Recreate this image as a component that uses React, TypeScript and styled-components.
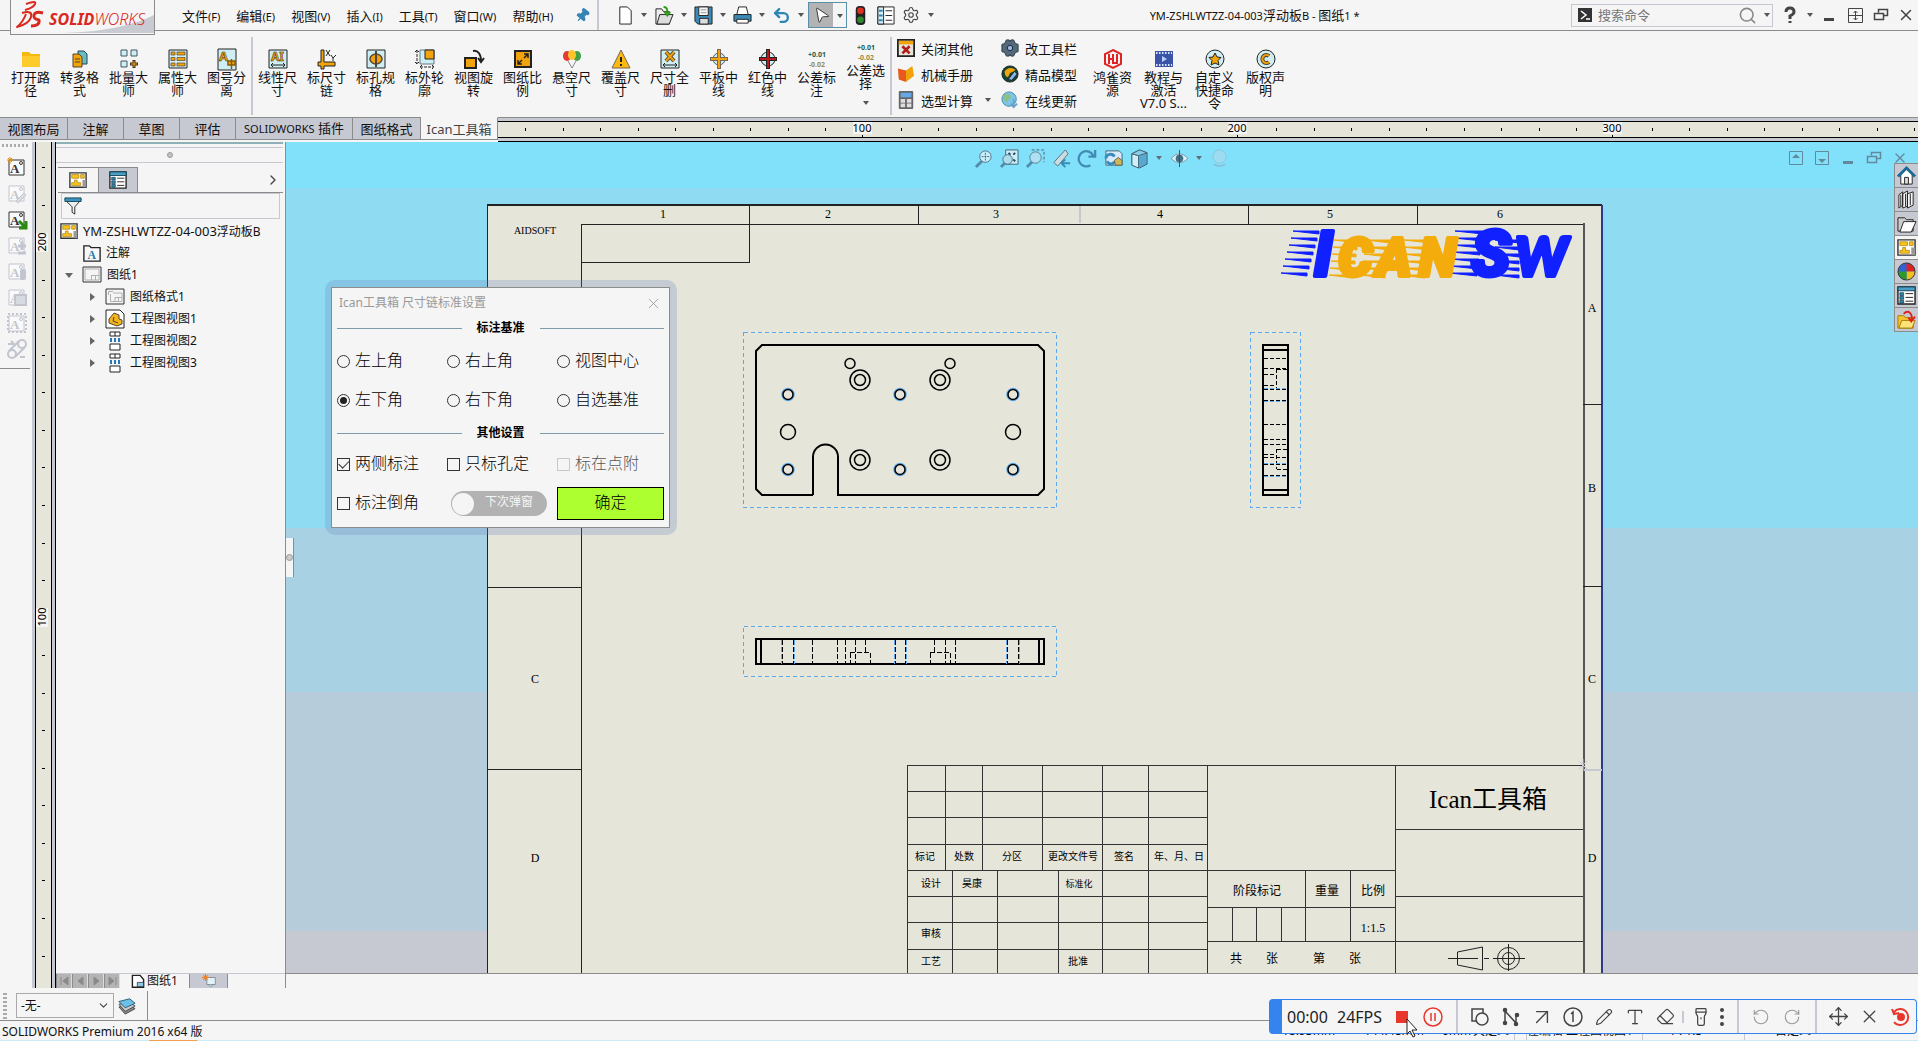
import React from "react";
import styled, { createGlobalStyle, css } from "styled-components";
import {
  MousePointer2, Settings, Pin, Search, ArrowUpRight, Pencil, Type, Eraser,
  Move, X, ChevronRight, ChevronDown, Undo2, RotateCcw, RotateCw, Flashlight,
} from "lucide-react";

const GREY = "#c6c8d2";
const LINE = "#8c8c8c";
const FACE = "#f5f5f5";
const PAPER = "#e5e5da";

const Global = createGlobalStyle`
  * { box-sizing: border-box; }
  body { margin: 0; background: ${FACE}; overflow: hidden; }
  body, button, input, select { font-family: "Noto Sans", "Noto Sans CJK SC", sans-serif; color: #111; }
  button { border: 0; background: none; padding: 0; }
  svg { display: block; flex: none; overflow: visible; }
`;

const Page = styled.div`
  display: flex;
  flex-direction: column;
  height: 100vh;
  background: ${FACE};
  font-size: 13px;
  line-height: 16px;
`;

/* ---------- title bar ---------- */
const TitleBar = styled.header`
  display: flex;
  align-items: center;
  height: 31px;
  flex: none;
  border-bottom: 1px solid ${LINE};
  padding-left: 10px;
`;
const Brand = styled.div`
  align-self: flex-start;
  width: 145px;
  height: 35px;
  margin-right: 27px;
  border: 1px solid ${LINE};
  border-top: 0;
  background: ${FACE};
  z-index: 2;
  flex: none;
`;
const Menu = styled.nav`
  display: flex;
  gap: 16px;
  button { font-size: 13px; white-space: nowrap; }
`;
const Small = styled.span`
  font-size: 11px;
`;
const PinBox = styled.button`
  margin: 0 7px 0 22px;
  color: #3585b5;
`;
const QuickBar = styled.div`
  display: flex;
  align-items: center;
  height: 30px;
  padding-left: 14px;
  border-left: 2px solid ${GREY};
`;
const QuickButton = styled.button<{ $wide?: boolean }>`
  display: grid;
  place-items: center;
  width: ${(p) => (p.$wide ? 26 : 24)}px;
  height: 26px;
`;
const Drop = styled.button<{ $w?: number }>`
  display: grid;
  place-items: center;
  width: ${(p) => p.$w ?? 14}px;
  height: 26px;
  flex: none;
  &::after {
    content: "";
    border: 3px solid transparent;
    border-top: 4px solid #555;
    border-bottom: 0;
  }
`;
const SelectTool = styled.div`
  display: flex;
  width: 39px;
  height: 26px;
  border: 1px solid #5b8fa8;
  margin: 0 1px 0 1px;
  button:first-child { flex: 1; display: grid; place-items: center; background: #b3b3b3; }
`;
const DocTitle = styled.h1`
  flex: 1;
  margin: 0;
  text-align: center;
  font-size: 13px;
  font-weight: 400;
  white-space: nowrap;
`;
const SearchBox = styled.label`
  display: flex;
  align-items: center;
  gap: 5px;
  width: 202px;
  height: 23px;
  padding: 0 0 0 5px;
  border: 1px solid ${GREY};
  flex: none;
  input { flex: 1; min-width: 0; border: 0; outline: 0; background: none; font-size: 13px; padding: 0; }
  input::placeholder { color: #777; opacity: 1; }
`;
const WindowButtons = styled.div`
  display: flex;
  padding-left: 4px;
  flex: none;
`;
const WindowButton = styled.button<{ $w?: number }>`
  width: ${(p) => p.$w ?? 26}px;
  height: 26px;
  display: grid;
  place-items: center;
`;

/* ---------- ribbon ---------- */
const Ribbon = styled.section`
  display: flex;
  height: 86px;
  flex: none;
  padding-left: 6px;
`;
const Group = styled.div`
  display: flex;
`;
const Divider = styled.i`
  width: 2px;
  margin: 6px 0 2px;
  background: ${GREY};
`;
const Tool = styled.button<{ $raised?: boolean; $wide?: boolean }>`
  display: flex;
  flex-direction: column;
  align-items: center;
  width: ${(p) => (p.$wide ? 51 : 49)}px;
  padding-top: ${(p) => (p.$raised ? 11 : 18)}px;
  font-size: 13px;
  line-height: 13px;
  white-space: nowrap;
  span { display: block; height: 13px; }
  svg { margin-bottom: 2px; }
`;
const Stack = styled.div<{ $w: number }>`
  width: ${(p) => p.$w}px;
  padding: 4px 0 0 5px;
`;
const StackRow = styled.div`
  display: flex;
  height: 26px;
  align-items: center;
`;
const StackTool = styled.button`
  display: flex;
  align-items: center;
  gap: 6px;
  font-size: 13px;
  white-space: nowrap;
`;

/* ---------- command tabs + rulers ---------- */
const TabRow = styled.div`
  display: flex;
  height: 25px;
  flex: none;
`;
const CommandTab = styled.button<{ $w: number; $on?: boolean }>`
  width: ${(p) => p.$w}px;
  height: 23px;
  font-size: 13px;
  line-height: 18px;
  white-space: nowrap;
  flex: none;
  background: ${(p) => (p.$on ? FACE : GREY)};
  color: ${(p) => (p.$on ? "#444" : "#111")};
  border: 1px solid ${LINE};
  border-left: 0;
  border-top-color: ${(p) => (p.$on ? FACE : LINE)};
`;
const RulerX = styled.div`
  flex: 1;
  min-width: 0;
  border-top: 1px solid ${LINE};
  border-bottom: 1px solid #000;
  background: ${GREY};
  padding: 3px 0;
  div { height: 17px; border: solid #000; border-width: 1px 0; background: ${PAPER}; overflow: hidden; }
`;
const RulerY = styled.div`
  width: 24px;
  flex: none;
  padding: 0 3px;
  background: ${GREY};
  border-right: 1px solid #000;
  div { height: 100%; border: solid #000; border-width: 0 1px; background: ${PAPER}; overflow: hidden; }
`;

/* ---------- work area ---------- */
const Work = styled.main`
  display: flex;
  flex: 1;
  min-height: 0;
`;
const SideTools = styled.aside`
  width: 32px;
  flex: none;
`;
const SideInner = styled.div`
  display: flex;
  flex-direction: column;
  align-items: center;
  width: 30px;
  height: 227px;
  padding: 12px 0 0 3px;
  border-bottom: 1px solid ${LINE};
  button { height: 26px; display: grid; place-items: center; }
`;
const Panel = styled.section`
  display: flex;
  flex-direction: column;
  width: 230px;
  flex: none;
  border-right: 1px solid ${LINE};
`;
const PanelGrip = styled.div`
  height: 21px;
  margin-right: 2px;
  display: flex;
  flex-direction: column;
  align-items: center;
  border-bottom: 1px solid ${GREY};
  i { height: 6px; width: 100%; border-top: 2px solid #8fb0b8; border-bottom: 1px solid ${GREY}; }
  b { width: 6px; height: 6px; margin-top: 4px; border-radius: 50%; background: #c4c4c4; border: 1px solid #999; }
`;
const PanelTabs = styled.div`
  display: flex;
  height: 26px;
  margin: 4px 2px 0 2px;
  border-bottom: 1px solid ${LINE};
  align-items: stretch;
`;
const PanelTab = styled.button<{ $on?: boolean }>`
  display: grid;
  place-items: center;
  width: 40px;
  border-top: 1px solid ${LINE};
  ${(p) => p.$on && css`background: ${GREY}; border: 1px solid ${LINE}; border-bottom: 0;`}
`;
const PanelMore = styled.button`
  margin-left: auto;
  padding-right: 2px;
`;
const FilterBox = styled.label`
  display: flex;
  align-items: center;
  height: 26px;
  margin: 0 5px;
  padding-left: 2px;
  border: 1px solid ${GREY};
  input { flex: 1; min-width: 0; border: 0; outline: 0; background: none; }
`;
const Tree = styled.ul`
  flex: 1;
  margin: 1px 0 0;
  padding: 0;
  list-style: none;
  font-size: 12px;
`;
const TreeRow = styled.li<{ $indent: number }>`
  display: flex;
  align-items: center;
  height: 22px;
  padding-left: ${(p) => p.$indent}px;
  gap: 5px;
  white-space: nowrap;
  b { font-size: 13px; font-weight: 400; }
`;
const Twist = styled.i<{ $open?: boolean }>`
  width: 10px;
  height: 10px;
  margin-right: 3px;
  display: grid;
  place-items: center;
  &::after {
    content: "";
    border: 4px solid transparent;
    ${(p) => p.$open
      ? css`border-top: 5px solid #666; border-bottom: 0;`
      : css`border-left: 5px solid #666; border-right: 0;`}
  }
`;
const SheetTabs = styled.div`
  display: flex;
  height: 15px;
  border-top: 1px solid ${GREY};
  overflow: hidden;
  align-items: stretch;
`;
const NavButton = styled.button`
  width: 16px;
  background: #b4b4b4;
  border-left: 1px solid ${LINE};
  border-right: 1px solid #ddd;
  display: grid;
  place-items: center;
`;
const SheetTab = styled.button<{ $w: number; $on?: boolean }>`
  display: flex;
  align-items: center;
  justify-content: center;
  gap: 2px;
  width: ${(p) => p.$w}px;
  font-size: 12px;
  line-height: 12px;
  background: ${(p) => (p.$on ? FACE : GREY)};
  border-right: 1px solid ${LINE};
`;
const CanvasColumn = styled.div`
  display: flex;
  flex-direction: column;
  flex: 1;
  min-width: 0;
  padding-bottom: 14px;
`;
const Canvas = styled.div`
  position: relative;
  flex: 1;
  overflow: hidden;
  border-bottom: 1px solid ${LINE};
  background: linear-gradient(
    #82e1fa 0 46px, #8fdbf2 46px 386px, #a8d1e3 386px 550px, #b6ccdb 550px 789px, ${GREY} 789px
  );
`;
const Sheet = styled.svg`
  position: absolute;
  left: 0;
  top: 0;
`;
const HeadsUp = styled.div`
  position: absolute;
  left: 50%;
  top: 6px;
  display: flex;
  margin-left: -132px;
  button { width: 26px; height: 20px; display: grid; place-items: center; opacity: .8; }
  button[data-drop] { width: 14px; }
`;
const DocButtons = styled.div`
  position: absolute;
  right: 5px;
  top: 6px;
  display: flex;
  opacity: .7;
  button { width: 26px; height: 20px; display: grid; place-items: center; }
`;
const TaskPane = styled.nav`
  position: absolute;
  right: 0;
  top: 21px;
  width: 24px;
  border: 1px solid ${LINE};
  border-right: 0;
`;
const TaskButton = styled.button<{ $on?: boolean }>`
  display: grid;
  place-items: center;
  width: 100%;
  height: 24px;
  background: ${(p) => (p.$on ? FACE : GREY)};
  border-bottom: 1px solid ${LINE};
  &:last-child { border-bottom: 0; height: 23px; }
`;
const Splitter = styled.button`
  position: absolute;
  left: 0;
  top: 396px;
  width: 8px;
  height: 39px;
  background: ${FACE};
  border-right: 1px solid ${LINE};
  display: grid;
  place-items: center;
  &::after { content: ""; width: 5px; height: 5px; border: 1px solid #999; border-radius: 50%; background: #ccc; }
`;

/* ---------- dialog ---------- */
const Dialog = styled.form`
  position: absolute;
  left: 45px;
  top: 145px;
  width: 339px;
  padding: 0 5px 4px;
  background: ${FACE};
  border: 1px solid ${LINE};
`;
const Halo = styled.div`
  position: absolute;
  left: 39px;
  top: 138px;
  width: 352px;
  height: 255px;
  border-radius: 10px;
  background: rgba(110, 130, 190, .26);
`;
const DialogTitle = styled.div`
  display: flex;
  justify-content: space-between;
  align-items: center;
  height: 30px;
  padding: 0 2px;
  font-size: 12px;
  color: #999;
  button { color: #888; }
`;
const Section = styled.h2`
  display: flex;
  align-items: center;
  height: 20px;
  margin: 0;
  gap: 15px;
  font-size: 12px;
  line-height: 18px;
  font-weight: 700;
  color: #000;
  &::before, &::after { content: ""; flex: 1; height: 1px; background: #7f9aa8; }
`;
const Options = styled.div<{ $tight?: boolean }>`
  display: grid;
  grid-template-columns: 110px 110px 1fr;
  grid-auto-rows: 39px;
  align-items: center;
  padding: ${(p) => (p.$tight ? "2px 0 0" : "4px 0 3px")};
`;
const Option = styled.label<{ $off?: boolean }>`
  display: flex;
  align-items: center;
  gap: 5px;
  font-size: 16px;
  line-height: 20px;
  white-space: nowrap;
  font-weight: 300;
  color: ${(p) => (p.$off ? "#555" : "#000")};
  span { padding-bottom: 4px; }
  input {
    appearance: none;
    width: 13px;
    height: 13px;
    margin: 0;
    border: 1px solid ${(p) => (p.$off ? GREY : "#333")};
    background: ${FACE};
    display: grid;
    place-items: center;
  }
  input[type="radio"] { border-radius: 50%; }
  input[type="radio"]:checked::after { content: ""; width: 7px; height: 7px; border-radius: 50%; background: #222; }
  input[type="checkbox"]:checked::after {
    content: ""; width: 9px; height: 5px; margin-top: -3px;
    border: solid #333; border-width: 0 0 1px 1px; transform: rotate(-45deg);
  }
`;
const Switch = styled.label`
  display: flex;
  align-items: center;
  gap: 11px;
  width: 96px;
  height: 25px;
  margin-left: 4px;
  padding-left: 1px;
  border-radius: 13px;
  background: #b2b2b2;
  color: #f5f5f5;
  font-size: 12px;
  white-space: nowrap;
  span { padding-bottom: 3px; }
  input { appearance: none; width: 22px; height: 22px; margin: 0; border-radius: 50%; background: ${FACE}; }
`;
const Confirm = styled.button`
  height: 33px;
  border: 1px solid #000;
  background: #adff2f;
  color: #000;
  font-size: 16px;
  line-height: 20px;
  font-weight: 300;
  padding-bottom: 4px;
`;

/* ---------- bottom bars ---------- */
const LayerBar = styled.div`
  display: flex;
  align-items: center;
  height: 33px;
  flex: none;
  padding: 3px 0 0 3px;
  border-bottom: 1px solid ${LINE};
`;
const GripY = styled.i`
  width: 4px;
  height: 26px;
  margin-right: 9px;
  background: repeating-linear-gradient(#aaa 0 2px, transparent 2px 4px);
`;
const GripX = styled.i`
  display: block;
  width: 28px;
  height: 3px;
  margin: 2px 0 -5px 2px;
  background: repeating-linear-gradient(90deg, #aaa 0 2px, transparent 2px 4px);
`;
const LayerSelect = styled.label`
  position: relative;
  width: 98px;
  height: 25px;
  margin-right: 4px;
  select {
    appearance: none; width: 100%; height: 100%; padding: 0 4px; font-size: 12px;
    border: 1px solid #aaa; border-radius: 0; background: ${FACE};
  }
  svg { position: absolute; right: 4px; top: 6px; pointer-events: none; }
`;
const LayerEnd = styled.div`
  display: flex;
  align-items: center;
  width: 30px;
  height: 29px;
  border-right: 1px solid ${LINE};
`;
const StatusBar = styled.footer`
  display: flex;
  height: 19px;
  flex: none;
  justify-content: space-between;
  padding: 2px 7px 0 2px;
  font-size: 12px;
  white-space: nowrap;
  line-height: 18px;
  overflow: hidden;
`;
const StatusRight = styled.div`
  display: flex;
  width: 629px;
  line-height: 16px;
`;
const Cell = styled.span<{ $w: number; $sep?: boolean }>`
  width: ${(p) => p.$w}px;
  border-right: ${(p) => (p.$sep ? `1px solid ${GREY}` : "0")};
`;
const TaskbarEdge = styled.div`
  height: 1px;
  flex: none;
  padding-left: 149px;
  background: #cdeaf5;
  i { display: block; width: 48px; height: 1px; background: #f0a050; }
`;
const Recorder = styled.div`
  position: fixed;
  right: 1px;
  bottom: 7px;
  display: flex;
  align-items: center;
  width: 648px;
  height: 35px;
  border: 1px solid #3583ee;
  border-left-width: 13px;
  border-radius: 4px;
  background: ${FACE};
  font-size: 16px;
  line-height: 20px;
  color: #222;
  time { margin-left: 5px; width: 50px; }
  output { width: 49px; }
`;
const RecButton = styled.button<{ $c?: string; $w?: number }>`
  display: grid;
  place-items: center;
  width: ${(p) => p.$w ?? 31}px;
  height: 30px;
  color: ${(p) => p.$c ?? "#444"};
`;
const RecLine = styled.i<{ $short?: boolean }>`
  width: 2px;
  height: ${(p) => (p.$short ? 12 : 33)}px;
  margin: ${(p) => (p.$short ? "0 2px 0 1px" : "0 6px 0 8px")};
  background: ${GREY};
`;
const Cursor = styled.svg`
  position: fixed;
  right: 500px;
  bottom: 3px;
`;

/* ---------- icons ---------- */
const O = "#f0a30a";
const K = "#222";
const P = "#cfeef3";

const art: Record<string, React.ReactNode> = {
  folder: <><path d="M1 3h7l2 2h9v13H1z" fill="#f5b912" /><path d="M1 7h18v11H1z" fill="#fdcb2c" /></>,
  convert: <><path d="M8 2h6l3 3v10H8z" fill="#6bbcc0" stroke="#245" /><path d="M3 5h6l3 3v10H3z" fill={O} stroke="#543" /><path d="M5 10h5M5 13h5" stroke="#543" /></>,
  batch: <><g fill={P} stroke="#456"><path d="M2 1h6v6H2zM12 1h6v6h-6zM2 12h6v6H2z" /></g><path d="M15 11v8M11 15h8" stroke="#432" strokeWidth="3" /><path d="M15 12v6M12 15h6" stroke={O} /></>,
  props: <><path d="M1 1h18v18H1z" fill={P} stroke={K} /><g fill={O} stroke="#543" strokeWidth=".7"><path d="M3 3h4v3H3zM9 3h8v3H9zM3 8.500h4v3H3zM9 8.500h8v3H9zM3 14h4v3H3zM9 14h8v3H9z" /></g></>,
  split: <><path d="M1 0h18v21H1z" fill={P} stroke={K} /><text x="2" y="12" fontSize="13" fontWeight="700" fill={O} stroke="#321" strokeWidth=".5">A</text><path d="M11 12h7v4h-7zM14.500 10v10" stroke="#8a5a00" strokeWidth="1.500" fill={O} /></>,
  linear: <><path d="M1 1h18v18H1z" fill={P} stroke={K} /><text x="3" y="12" fontSize="12" fontWeight="700" fill={O} stroke="#321" strokeWidth=".5">AI</text><path d="M3 16h14M5 14l-2 2 2 2M15 14l2 2-2 2" stroke={K} fill="none" /></>,
  chain: <><path d="M4 1h3v12h11v4H7v3H4v-3H1v-4h3z" fill={O} stroke={K} /><path d="M9 1l4 6M13 1L9 7M14 6l2 3 3-3M16 9v3" stroke={K} fill="none" /></>,
  hole: <><path d="M1 1h18v18H1z" fill={P} stroke={K} /><ellipse cx="10" cy="10" rx="6" ry="5" fill={O} stroke="#543" strokeWidth="1.500" /><path d="M10 2v16" stroke="#543" strokeWidth="2" /></>,
  outline: <><path d="M5 1h14v14H5z" fill={P} stroke="#678" /><path d="M10 1h9v9h-9z" fill={O} stroke={K} /><path d="M2 1v14M0 3l2-2 2 2M0 13l2 2 2-2M5 18h14M7 16l-2 2 2 2M17 16l2 2-2 2" stroke={K} fill="none" strokeDasharray="3 1" /></>,
  rotate: <><path d="M1 9h11v10H1z" fill={O} stroke={K} strokeWidth="2" /><path d="M9 2c5-1 8 3 8 10M14 9l3 4 3-4" stroke={K} strokeWidth="2" fill="none" /></>,
  scale: <><path d="M2 2h16v16H2z" fill={O} stroke={K} strokeWidth="2" /><path d="M11 5h4v4M15 5l-4 4M5 11v4h4M5 15l4-4" stroke={K} strokeWidth="1.500" fill="none" /></>,
  balloon: <><ellipse cx="5" cy="7" rx="4" ry="5" fill="#e53935" /><ellipse cx="15" cy="7" rx="4" ry="5" fill="#43a047" /><ellipse cx="10" cy="6" rx="4" ry="5" fill="#fdc52c" /><path d="M6 12l4 7 4-7" stroke="#888" fill="none" /></>,
  warn: <><path d="M10 1l9 18H1z" fill="#fbb910" stroke="#765" strokeLinejoin="round" /><path d="M10 8v5M10 15v2" stroke={K} strokeWidth="2" /></>,
  delall: <><path d="M1 1h18v18H1z" fill={P} stroke={K} /><path d="M6 3l8 9M14 3l-8 9" stroke="#543" strokeWidth="4" /><path d="M6 3l8 9M14 3l-8 9" stroke={O} strokeWidth="2" /><path d="M3 16h14M5 14l-2 2 2 2M15 14l2 2-2 2" stroke={K} fill="none" /></>,
  plate: <><circle cx="10" cy="10" r="6" fill={P} stroke="#456" /><path d="M10 0v20M1 10h18" stroke="#765" strokeWidth="4" /><path d="M10 1v18M2 10h16" stroke={O} strokeWidth="2" /></>,
  redc: <><circle cx="10" cy="10" r="7" fill={P} stroke={K} /><path d="M10 0v20M1 10h18" stroke={K} strokeWidth="4" /><path d="M10 1v18M2 10h16" stroke="#b71c1c" strokeWidth="2" /></>,
  tol: <g fontSize="7" fontWeight="700" textAnchor="middle"><text x="10" y="8" fill="#1b5e50">+0.01</text><text x="10" y="18" fill="#9a8a50">-0.02</text></g>,
  close: <><path d="M1 1h18v18H1z" fill={PAPER} stroke={K} strokeWidth="2" /><path d="M2 2h16v4H2z" fill={O} /><path d="M6 8l8 8M14 8l-8 8" stroke="#b01c1c" strokeWidth="3" /></>,
  book: <><path d="M1 4l9 2v13l-8-3z" fill="#e65a1e" /><path d="M10 6l7-5 2 11-9 7z" fill={O} /></>,
  calc: <><rect x="2" y="0" width="16" height="20" rx="1" fill="#666" /><path d="M4 2h12v5H4z" fill="#64a8e8" /><path d="M4 9h5v4H4zM11 9h5v4h-5zM4 14h5v4H4zM11 14h5v4h-5z" fill="#ddd" /></>,
  cog: <><path d="M6 1h3l1 2 1-2h3l2 4 3 1v8l-3 1-2 4h-3l-1-2-1 2H6l-2-4-3-1V6l3-1z" fill="#546a7b" stroke="#234" /><circle cx="10" cy="10" r="3" fill="#9bd" stroke="#123" /></>,
  globe: <><circle cx="10" cy="10" r="9" fill="#143" stroke={K} /><path d="M4 7c4-5 8-4 12-2-2 4-6 2-7 6s-5 3-5-4z" fill={O} /><path d="M8 16l7-9 3 3-6 7z" fill="#8ab4f0" stroke={K} /></>,
  update: <><circle cx="9" cy="9" r="8" fill="#7cc4e8" stroke="#48a" /><path d="M4 4c4-2 7 0 7 3s-5 2-4 6c-4-2-6-6-3-9z" fill="#8cc08a" /><path d="M14 9v8M11 14l3 4 4-4" stroke="#6aa0c8" strokeWidth="2" fill="none" /></>,
  seal: <g fill="none" stroke="#e02424" strokeWidth="2"><path d="M10 1l8 4v10l-8 4-8-4V5z" /><path d="M6 5v10M6 10h4M10 5v10M14 5v9h-3" /></g>,
  film: <><path d="M1 2h18v16H1z" fill="#3a55a8" /><path d="M2 4h16M2 16h16" stroke="#dfe6ff" strokeWidth="2" strokeDasharray="1.500 1.500" /><path d="M8 7l5 3-5 3z" fill="#bcd0ff" /></>,
  star: <><circle cx="10" cy="10" r="9" fill={P} stroke={K} /><path d="M10 4l2 4 4 .5-3 3 1 4.500-4-2-4 2 1-4.500-3-3 4-.5z" fill={O} stroke={K} /></>,
  copy: <><circle cx="10" cy="10" r="9" fill={P} stroke={K} /><path d="M13 7a4 4 0 1 0 0 6" stroke="#543" strokeWidth="4" fill="none" /><path d="M13 7a4 4 0 1 0 0 6" stroke={O} strokeWidth="2" fill="none" /></>,

  newdoc: <path d="M4 1h8l4 4v14H4z" fill="#fff" stroke={K} strokeLinejoin="round" />,
  open: <><path d="M1 3h6l2 3h6v13H1z" fill="#eee" stroke={K} /><path d="M5 9h14l-4 10H2z" fill="#ddd" stroke={K} /><path d="M9 1c4 0 4 3 4 7M10 6l3 4 3-4" stroke="#2a9a12" strokeWidth="2" fill="none" /></>,
  save: <><path d="M1 1h18v18H4l-3-3z" fill="#3b8ab5" stroke={K} /><path d="M5 1h10v9H5z" fill="#f5f5f5" stroke={K} /><path d="M7 4h6M7 7h6" stroke="#999" /><path d="M6 13h9v6H6z" fill="#ddd" stroke={K} /></>,
  print: <><path d="M6 1h8l2 8H4z" fill="#fff" stroke={K} /><path d="M1 9h18v7H1z" fill="#3b8ab5" stroke={K} /><path d="M4 14h12v4H4z" fill="#fff" stroke={K} /></>,
  light: <><rect x="5" y="0" width="10" height="20" rx="4" fill="#222" /><circle cx="10" cy="5" r="3.500" fill="#e03020" /><circle cx="10" cy="14.500" r="3.500" fill="#2f8a2f" /></>,
  list: <><path d="M2 1h17v18H2z" fill="#fff" stroke={K} /><path d="M2 1h6v18H2z" fill="#d8eef6" stroke={K} /><path d="M3 5h4M3 10h4M3 15h4" stroke="#2f86b0" strokeWidth="2" /><path d="M10 5h7M10 10h7M10 15h7" stroke={K} /></>,
  sheetDoc: <><path d="M1 2h18v16H1z" fill="#fff" stroke="#333" strokeWidth="1.500" /><path d="M15 10h4v8h-4z" fill="#999" /><path d="M3 4h8v4H3zM13 4h4v4h-4zM6 10h3v3h4v3H3v-3h3z" fill="#fcc419" stroke="#a8841a" strokeWidth=".8" /></>,
  propTab: <><path d="M1 1h18v18H1z" fill="#fff" stroke={K} strokeWidth="1.500" /><path d="M1 1h18v4H1z" fill="#4a9fc8" stroke="#145" /><path d="M3 7h4v3H3zM3 11h4v3H3zM3 15h4v3H3z" fill="#2f86b0" stroke="#134" strokeWidth=".7" /><path d="M9 8h8M9 12h8M9 16h8" stroke={K} /></>,
  filter: <><path d="M1 3h18l-7 8v8l-3-2v-6z" fill="#eee" stroke={K} /><path d="M1 1h18v4H1z" fill="#3b93bd" stroke="#145" /></>,
  annot: <><path d="M1 2h6l2 2h10v15H1z" fill="#f8f8f8" stroke={K} strokeWidth="1.500" /><text x="5" y="17" fontSize="13" fontWeight="700" fill="#2878a8" fontFamily="Liberation Serif, serif">A</text></>,
  sheet: <><path d="M1 2h18v15H1z" fill="#f5f5f5" stroke="#333" /><path d="M3 4h14v11H3zM9.500 10.500H17M9.500 10v5M13.500 10.500V15" fill="none" stroke="#b0b0b0" /></>,
  format: <><path d="M1 2h18v15H1z" fill="#f5f5f5" stroke="#333" /><path d="M3.500 8V4.500H8M5.500 7v7.500H10M8 6h9v8.500h-7v-4h7M13.500 10v4" fill="none" stroke="#b0b0b0" /></>,
  view1: <><path d="M1 1h14l4 4v14H1z" fill="#fff" stroke={K} /><path d="M4 10l5-6 5 2v4l3 1v4l-5 2-8-3z" fill="#f2b51c" stroke="#543" /><path d="M9 8l-1 4 5 2" stroke="#543" fill="none" /></>,
  view2: <><path d="M5 1h10v4H5zM10 1v4" fill="#fff" stroke={K} /><path d="M6 7v4M10 7v4M14 7v4" stroke="#2878b8" strokeWidth="2" /><path d="M5 13h10v6H5z" fill="#fff" stroke={K} /></>,
  zoomFit: <><path d="M9 12l-7 7" stroke="#47799a" strokeWidth="3" /><circle cx="12" cy="8" r="6" fill="#d8f3fb" stroke="#456" /><path d="M12 4v8M8 8h8" stroke="#345" strokeDasharray="2 1" /></>,
  zoomAll: <><path d="M6 1h13v15H6z" fill="#dff3f8" stroke="#345" /><path d="M9 4l2 2M16 4l-2 2M16 13l-2-2" stroke="#123" strokeWidth="2" /><path d="M6 14l-5 5" stroke="#47799a" strokeWidth="3" /><circle cx="8" cy="11" r="5" fill="#b8dcea" stroke="#456" /></>,
  zoomBox: <><path d="M6 1h13v13" fill="none" stroke="#345" strokeDasharray="3 2" /><path d="M7 13l-6 6" stroke="#47799a" strokeWidth="3" /><circle cx="10" cy="9" r="6" fill="#b8e2f2" stroke="#567" /></>,
  prev: <><path d="M2 14L14 1l3 4L6 18z" fill="#ddd" stroke="#555" /><path d="M19 15h-8M14 11l-4 4 4 4" stroke="#2878a8" strokeWidth="2" fill="none" /></>,
  turn: <path d="M13 17a8 8 0 1 1 3-10M18 1v7h-7" fill="none" stroke="#3178a5" strokeWidth="2.500" />,
  rebuild: <><path d="M2 2h14l3 3v12H2z" fill="#eef" stroke="#345" /><path d="M2 10c0-5 7-6 9-2M3 13c3 4 7 3 8 0" stroke="#2878a8" strokeWidth="3" fill="none" /><path d="M11 12l4-3 4 3v5h-7z" fill="#e0b030" stroke="#543" /></>,
  cube: <><path d="M2 5l8-4 8 3v12l-8 4-8-3z" fill="#4f9cc4" stroke="#345" /><path d="M2 5l7 2v13l-7-3z" fill="#e4f2f8" stroke="#345" /><path d="M2 5l7 2 9-3-8-3z" fill="#8cc8e4" stroke="#345" /></>,
  eye: <><path d="M1 10q9-10 18 0q-9 9-18 0z" fill="#f4f4f4" stroke="#789" /><circle cx="10" cy="10" r="4" fill="#34566a" /><path d="M10 1v18" stroke="#234" /></>,
  ball: <><circle cx="10" cy="8" r="7" fill="#a4dcee" stroke="#8cc0d4" /><path d="M4 16q6 4 12 0" stroke="#8cb8cc" strokeWidth="2" fill="none" /></>,
  home: <><path d="M4 9v10h12V9l-6-6z" fill="#fff" stroke={K} /><path d="M1 11l9-9 9 9" stroke="#1b6a94" strokeWidth="3" fill="none" /><path d="M8 12h4v7H8z" fill="#ddd" stroke={K} /></>,
  books: <g fill="#f5f5f5" stroke={K}><path d="M2 5l4-3v14l-4 3zM6 4l5-3v16l-5 2zM11 4l6-2v14l-6 3z" /><path d="M4 5v12M9 4v13M14 4v12" /></g>,
  lib: <><path d="M1 4h7l2 2h7v12H1z" fill="#ccc" stroke={K} /><path d="M7 8h13l-5 11H3z" fill="#fff" stroke={K} /></>,
  color: <><circle cx="10" cy="10" r="9" fill="#2d62d8" /><path d="M10 1a9 9 0 0 1 9 9h-9z" fill="#d22" /><path d="M10 19a9 9 0 0 0 9-9h-9z" fill="#f4c020" /><path d="M10 19a9 9 0 0 1-9-9h9z" fill="#2a9a2a" /><circle cx="10" cy="10" r="9" fill="none" stroke="#333" /></>,
  share: <><path d="M1 6h6l2 2h8v11H1z" fill="#f4c430" stroke="#a67c00" /><path d="M5 11h14l-3 8H2z" fill="#fde27a" stroke="#a67c00" /><path d="M7 4c5-5 10 0 8 7M12 8l3 4 4-5" stroke="#d22" strokeWidth="2" fill="none" /></>,
  layers: <><path d="M1 11l12-2 6 4-11 6z" fill="#888" stroke="#444" /><path d="M1 8l12-2 6 4-11 6z" fill="#ccc" stroke="#444" /><path d="M1 5l12-3 6 5-11 5z" fill="#6cc0e8" stroke="#256" /></>,
  addSheet: <><path d="M7 5h12v10H7zM9 15l3 3 4-3" fill="#e4f2f8" stroke="#678" /><path d="M5 0v10M0 5h10M2 2l6 6M8 2L2 8" stroke="#f08020" strokeWidth="1.500" /></>,
  tabSheet: <><path d="M2 2h11l5 6v11H2z" fill="#fff" stroke={K} strokeWidth="2" /><path d="M9 12h9v6H9z" fill="#8cc8e8" stroke={K} /></>,
};

function Icon({ name, size = 20 }: { name: string; size?: number }) {
  return <svg width={size} height={size} viewBox="0 0 20 20" aria-hidden="true">{art[name]}</svg>;
}

const noteMarks = [
  <path key="s" d="M3 0v7M0 3h6M1 1l4 4M5 1l-4 4" stroke="#e08a10" />,
  <path key="p" d="M9 18l8-8 2 2-8 8z" fill="#ddd" stroke="#c2c4ce" />,
  <path key="g" d="M12 12l6 6M19 12v7h-7" stroke="#2a8a10" strokeWidth="3" fill="none" />,
  <path key="a" d="M15 7v8M11 11h8M11 18h8" stroke="#c2c4ce" strokeWidth="3" />,
  <rect key="l" x="13" y="8" width="6" height="11" rx="2" fill="#c2c4ce" />,
  <path key="c" d="M8 8h11v10H8z" fill="#d8dae2" stroke="#c2c4ce" strokeWidth="2" />,
  <path key="d" d="M1 1h18v18H1z" fill="none" stroke="#c2c4ce" strokeWidth="2" strokeDasharray="2 2" />,
];
function NoteIcon({ i }: { i: number }) {
  const c = i === 0 || i === 2 ? "#333" : "#c2c4ce";
  if (i === 7)
    return <svg width="20" height="20" viewBox="0 0 20 20"><g fill="none" stroke="#c2c4ce" strokeWidth="2"><circle cx="5" cy="15" r="4" /><circle cx="15" cy="5" r="4" /><path d="M2 12L12 2M8 18L18 8M1 5h6M4 2l3 3M13 18h5" /></g></svg>;
  return (
    <svg width="20" height="20" viewBox="0 0 20 20">
      <path d="M2 3h15v15H2z" fill="#fafafa" stroke={c} />
      <text x="3" y="16" fontSize="13" fontWeight="700" fontFamily="Liberation Serif, serif" fill={c}>A</text>
      <circle cx="14" cy="6" r="1.500" fill="none" stroke={c} />
      {noteMarks[i]}
    </svg>
  );
}

/* ---------- data ---------- */
const menus = [["文件", "F"], ["编辑", "E"], ["视图", "V"], ["插入", "I"], ["工具", "T"], ["窗口", "W"], ["帮助", "H"]];
type T = [string, string[]];
const fileTools: T[] = [["folder", ["打开路", "径"]], ["convert", ["转多格", "式"]], ["batch", ["批量大", "师"]], ["props", ["属性大", "师"]], ["split", ["图号分", "离"]]];
const dimTools: T[] = [
  ["linear", ["线性尺", "寸"]], ["chain", ["标尺寸", "链"]], ["hole", ["标孔规", "格"]], ["outline", ["标外轮", "廓"]],
  ["rotate", ["视图旋", "转"]], ["scale", ["图纸比", "例"]], ["balloon", ["悬空尺", "寸"]], ["warn", ["覆盖尺", "寸"]],
  ["delall", ["尺寸全", "删"]], ["plate", ["平板中", "线"]], ["redc", ["红色中", "线"]], ["tol", ["公差标", "注"]],
];
const moreTools: T[] = [["seal", ["鸿雀资", "源"]], ["film", ["教程与", "激活", "V7.0 S..."]], ["star", ["自定义", "快捷命", "令"]], ["copy", ["版权声", "明"]]];
const tabs: [React.ReactNode, number][] = [
  ["视图布局", 68], ["注解", 56], ["草图", 56], ["评估", 56],
  [<><Small>SOLIDWORKS</Small> 插件</>, 117], ["图纸格式", 68], ["Ican工具箱", 77],
];

function ToolButton({ t, wide }: { t: T; wide?: boolean }) {
  return <Tool $wide={wide}><Icon name={t[0]} />{t[1].map((l) => <span key={l}>{l}</span>)}</Tool>;
}

/* ---------- drawing sheet ---------- */
const H = ({ y, a, b, ...r }: { y: number; a: number; b: number } & React.SVGProps<SVGPathElement>) => <path d={`M${a} ${y}H${b}`} {...r} />;
const V = ({ x, a, b, ...r }: { x: number; a: number; b: number } & React.SVGProps<SVGPathElement>) => <path d={`M${x} ${a}V${b}`} {...r} />;
const BLUE = "#5aa9f0";

const blockText: [string, number, number, number][] = [
  ["标记", 925, 856, 10], ["处数", 964, 856, 10], ["分区", 1012, 856, 10], ["更改文件号", 1073, 856, 10], ["签名", 1124, 856, 10], ["年、月、日", 1179, 856, 10],
  ["设计", 931, 883, 10], ["昊康", 972, 883, 10], ["标准化", 1079, 883, 9], ["审核", 931, 933, 10], ["工艺", 931, 961, 10], ["批准", 1078, 961, 10],
  ["阶段标记", 1257, 891, 12], ["重量", 1327, 891, 12], ["比例", 1373, 891, 12], ["1:1.5", 1373, 928, 12],
  ["共", 1236, 959, 12], ["张", 1272, 959, 12], ["第", 1319, 959, 12], ["张", 1355, 959, 12],
];
const zoneText: [string, number, number][] = [
  ["1", 663, 214], ["2", 828, 214], ["3", 996, 214], ["4", 1160, 214], ["5", 1330, 214], ["6", 1500, 214],
  ["A", 1592, 308], ["B", 1592, 488], ["C", 1592, 679], ["D", 1592, 858], ["C", 535, 679], ["D", 535, 858],
];

function Drawing() {
  const speed = (x: number, y: number, w: number, c: string) => <path key={`${x}-${y}`} d={`M${x} ${y}h${w}v3z`} fill={c} stroke={c} />;
  return (
    <Sheet width="1340" height="831" viewBox="286 142 1340 831" role="img" aria-label="图纸1">
      <path d="M488 205H1602V990H488z" fill={PAPER} />
      <g stroke="#222" fill="none" shapeRendering="crispEdges">
        <path d="M487.500 980V205" />
        <path d="M487 205H1602" strokeWidth="2" />
        <path d="M581.500 980V224H1583" />
        <path d="M1583.500 223V980" strokeWidth="2" stroke="#555" />
        <path d="M1602 205V980" stroke="#2b3a8c" strokeWidth="2" />
        <path d="M749 205V262H582M918 205V224M1248 205V224M1417 205V224" />
        <path d="M1080 206V223M1584 770H1602" stroke={GREY} strokeWidth="2" />
        <path d="M1583 404H1602M1583 586H1602M488 587H582M488 769H582" />
      </g>

      <g>
        {[0, 1, 2, 3, 4, 5, 6].map((i) => speed(1293 - i * 2, 231 + i * 7, 26, "#1020ff"))}
        {[0, 1, 2, 3, 4, 5].map((i) => speed(1334 - i, 240 + i * 7, 24, "#f4ac0c"))}
        {[0, 1, 2, 3, 4, 5].map((i) => speed(1366 - i, 240 + i * 7, 24, "#f4ac0c"))}
        {[0, 1, 2, 3, 4, 5].map((i) => speed(1404 - i, 240 + i * 7, 26, "#f4ac0c"))}
        {[0, 1, 2, 3, 4, 5, 6].map((i) => speed(1455 - i, 231 + i * 7, 28, "#1020ff"))}
        {[0, 1, 2, 3, 4, 5].map((i) => speed(1495, 240 + i * 7, 24, "#1020ff"))}
        <g fontFamily="Roboto, sans-serif" fontWeight="900" fontStyle="italic" fontSize="56" strokeWidth="4" strokeLinejoin="round">
          <g fill="#1020ff" stroke="#1020ff">
            <text x="1314" y="276" fontSize="63">I</text>
            <text x="1471" y="276" fontSize="65">S</text>
            <text x="1515" y="276" fontSize="54" fontFamily="Lato, sans-serif">W</text>
          </g>
          <g fill="#f4ac0c" stroke="#f4ac0c">
            <text x="1338" y="276" fontSize="54">C</text><text x="1376" y="276" fontSize="54">A</text><text x="1419" y="276" fontSize="54">N</text>
          </g>
        </g>
      </g>

      <g fontFamily='"Liberation Serif", "Noto Sans CJK SC", serif' fill="#000" textAnchor="middle">
        <text x="535" y="234" fontSize="10" fontFamily='"Liberation Sans Narrow", "Liberation Serif", serif'>AIDSOFT</text>
        {zoneText.map(([t, x, y]) => <text key={t + x} x={x} y={y + 4} fontSize="12">{t}</text>)}
        {blockText.map(([t, x, y, s]) => <text key={t + x} x={x} y={y + 4} fontSize={s}>{t}</text>)}
        <text x="1488" y="808" fontSize="25">Ican工具箱</text>
      </g>

      <g fill="none" stroke={BLUE} strokeDasharray="4 3" shapeRendering="crispEdges">
        <path d="M743.500 332.500H1056.500V507.500H743.500z" />
        <path d="M1250.500 332.500H1300.500V507.500H1250.500z" />
        <path d="M743.500 626.500H1056.500V676.500H743.500z" />
      </g>
      <g fill="none" stroke="#000" strokeWidth="2">
        <path d="M813 495H762L756 489V351L762 345H1038L1044 351V489L1038 495H838V457A12.500 12.500 0 0 0 813 457V495" />
        <g strokeWidth="1.500">
          {[850, 950].map((x) => <circle key={x} cx={x} cy="363.500" r="5" />)}
          {[860, 940].flatMap((x) => [380, 460].map((y) => <g key={x + y}><circle cx={x} cy={y} r="10" /><circle cx={x} cy={y} r="5.500" /></g>))}
          {[788, 1013].map((x) => <circle key={x} cx={x} cy="432" r="7.500" />)}
          {[788, 900, 1013].flatMap((x) => [394.5, 469.5].map((y) => <g key={x + y}><circle cx={x} cy={y} r="6" stroke={BLUE} /><circle cx={x} cy={y} r="5" /></g>))}
        </g>
      </g>
      <g fill="none" stroke="#000" shapeRendering="crispEdges">
        <path d="M1263 345H1288V495H1263zM1263 350H1288M1263 490H1288" strokeWidth="2" />
        <g strokeDasharray="4 2">
          {[358, 368, 389, 400, 424, 439, 444, 457, 464, 475].map((y) => <H key={y} y={y + 0.5} a={1264} b={1288} />)}
          {[374, 385, 454].map((y) => <H key={y} y={y + 0.5} a={1264} b={1276} />)}
          {[369, 449, 469].map((y) => <H key={y} y={y + 0.5} a={1277} b={1288} />)}
          <path d="M1276.500 369V389M1276.500 449V469" />
          {[388, 401, 463, 476].map((y) => <H key={y} y={y + 0.5} a={1264} b={1288} stroke={BLUE} />)}
        </g>
        <path d="M756 639H1044V664H756zM761 639V664M1039 639V664" strokeWidth="2" />
        <g strokeDasharray="5 2">
          {[782, 793, 812, 837, 845, 855, 895, 905, 945, 955, 1007, 1018].map((x) => <V key={x} x={x + 0.5} a={640} b={664} />)}
          {[865, 934].map((x) => <V key={x} x={x + 0.5} a={640} b={652} />)}
          {[850, 870, 930, 950].map((x) => <V key={x} x={x + 0.5} a={653} b={664} />)}
          <path d="M850 652.500H870M930 652.500H950" />
          {[781, 794, 894, 906, 1006, 1019].map((x) => <V key={x} x={x + 0.5} a={640} b={664} stroke={BLUE} />)}
        </g>
      </g>

      <g fill="none" stroke="#333" shapeRendering="crispEdges">
        <path d="M907.500 980V765.500H1583" />
        {[791, 817, 844, 870, 896, 922, 949].map((y) => <H key={y} y={y + 0.5} a={908} b={1208} />)}
        {[945, 982, 1042].map((x) => <V key={x} x={x + 0.5} a={765} b={870} />)}
        {[952, 997, 1058].map((x) => <V key={x} x={x + 0.5} a={870} b={980} />)}
        {[1102, 1148, 1207, 1395].map((x) => <V key={x} x={x + 0.5} a={765} b={980} />)}
        <path d="M1208 870.500H1395M1208 907.500H1395M1208 941.500H1583M1395 829.500H1583M1395 896.500H1583" />
        <path d="M1305.500 870V941M1350.500 870V941M1232.500 907V941M1256.500 907V941M1281.500 907V941" />
      </g>
      <g fill="none" stroke="#222">
        <path d="M1457.500 952L1482.500 947V970L1457.500 965zM1448 958.500H1478M1484 958.500H1489M1493 958.500H1525M1508.500 944V971" />
        <circle cx="1508.500" cy="958.500" r="11" /><circle cx="1508.500" cy="958.500" r="6" />
      </g>
      <path d="M1579 761l8 8M1587 761l-8 8M1583 759v12" stroke={GREY} />
    </Sheet>
  );
}

function HorizontalRuler() {
  const marks = Array.from({ length: 50 }, (_, i) => i);
  return (
    <RulerX><div>
      <svg width="100%" height="15">
        {marks.map((i) => <rect key={i} x={Math.round(27 + i * 37.55)} y="6" width="1" height="3" />)}
        {[100, 200, 300].map((n, i) => (
          <g key={n}>
            <rect x={355 + i * 375} y="0" width="19" height="12" fill={FACE} />
            <text x={364 + i * 375} y="10" fontSize="11" textAnchor="middle">{n}</text>
            <rect x={364 + i * 375} y="13" width="1" height="2" />
          </g>
        ))}
      </svg>
    </div></RulerX>
  );
}
function VerticalRuler() {
  const marks = Array.from({ length: 22 }, (_, i) => i);
  return (
    <RulerY><div>
      <svg width="15" height="846">
        {marks.map((i) => <rect key={i} x="6" y={Math.round(25 + i * 37.55)} width="3" height="1" />)}
        {[200, 100].map((n, i) => (
          <g key={n}>
            <rect x="0" y={91 + i * 375} width="12" height="19" fill={FACE} />
            <text transform={`translate(10 ${100 + i * 375}) rotate(-90)`} fontSize="11" textAnchor="middle">{n}</text>
          </g>
        ))}
      </svg>
    </div></RulerY>
  );
}

const WinMin = ({ c }: { c: string }) => <svg width="14" height="14"><path d="M2 10h10v3H2z" fill={c} /></svg>;
const WinRestore = ({ c }: { c: string }) => <svg width="14" height="14" fill="none" stroke={c}><path d="M4.500 4.500v-3h9v6h-4M.5 5.500h9v6h-9z" strokeWidth="1.500" /></svg>;

export default function App() {
  return (
    <Page>
      <Global />
      <TitleBar>
        <Brand>
          <svg width="143" height="34" viewBox="0 0 143 34" role="img" aria-label="SOLIDWORKS">
            <path d="M52 33Q112 31 143 15V33H52z" fill="#c9cbd3" />
            <g fill="none" stroke="#d9281e" strokeWidth="2" strokeLinejoin="round">
              <path d="M15 4Q26 0 24 4T14 10M11 13Q22 10 20 17T6 27Q12 22 15 14" />
              <path d="M32 13Q24 11 23 15T28 20Q29 26 20 26" strokeWidth="3" />
            </g>
            <text x="38" y="25" fontSize="16" fontStyle="italic" fill="#d9281e"><tspan fontWeight="700">SOLID</tspan><tspan fontWeight="300">WORKS</tspan></text>
          </svg>
        </Brand>
        <Menu>{menus.map(([t, k]) => <button key={k}>{t}<Small>({k})</Small></button>)}</Menu>
        <PinBox aria-label="固定"><Pin size={15} fill="currentColor" transform="rotate(40)" /></PinBox>
        <QuickBar>
          <QuickButton aria-label="新建"><Icon name="newdoc" size={19} /></QuickButton><Drop aria-label="更多" />
          <QuickButton aria-label="打开" $wide><Icon name="open" size={19} /></QuickButton><Drop $w={13} aria-label="更多" />
          <QuickButton aria-label="保存" $wide><Icon name="save" size={19} /></QuickButton><Drop $w={13} aria-label="更多" />
          <QuickButton aria-label="打印" $wide><Icon name="print" size={19} /></QuickButton><Drop $w={13} aria-label="更多" />
          <QuickButton aria-label="撤销" $wide><Undo2 size={19} color="#2f86b5" strokeWidth={3} /></QuickButton><Drop $w={13} aria-label="更多" />
          <SelectTool><button aria-label="选择"><MousePointer2 size={19} fill="#fff" color="#222" strokeWidth={1} transform="rotate(12)" /></button><Drop $w={13} aria-label="更多" /></SelectTool>
          <QuickButton aria-label="重建"><Icon name="light" size={19} /></QuickButton>
          <QuickButton aria-label="文件属性" $wide><Icon name="list" size={19} /></QuickButton>
          <QuickButton aria-label="选项" $wide><Settings size={18} color="#444" strokeWidth={1.5} /></QuickButton><Drop aria-label="更多" />
        </QuickBar>
        <DocTitle><Small>YM-ZSHLWTZZ-04-003</Small>浮动板<Small>B - </Small>图纸<Small>1 *</Small></DocTitle>
        <SearchBox>
          <svg width="16" height="16"><path d="M1 1h14v14H1z" fill="#333" /><path d="M4 4l5 4-5 4M9 12h4" stroke="#fff" strokeWidth="1.500" fill="none" /></svg>
          <input aria-label="搜索命令" placeholder="搜索命令" />
          <Search size={19} color="#888" strokeWidth={2} />
          <Drop $w={10} aria-label="搜索选项" />
        </SearchBox>
        <WindowButtons>
          <WindowButton aria-label="帮助"><svg width="12" height="18"><path d="M2 6q0-4 4-4t4 4q0 2-4 4v3M6 15v2" fill="none" stroke="#444" strokeWidth="3" /></svg></WindowButton>
          <Drop $w={13} aria-label="帮助选项" />
          <WindowButton aria-label="最小化"><WinMin c="#444" /></WindowButton>
          <WindowButton aria-label="展开"><svg width="15" height="15" fill="none" stroke="#444"><path d="M.5 .5h14v14H.5zM0 7.500h15M7.500 3v9M5.500 5l2-2 2 2M5.500 10l2 2 2-2" /></svg></WindowButton>
          <WindowButton aria-label="还原"><WinRestore c="#444" /></WindowButton>
          <WindowButton $w={24} aria-label="关闭"><X size={18} color="#444" /></WindowButton>
        </WindowButtons>
      </TitleBar>

      <Ribbon>
        <Group>{fileTools.map((t) => <ToolButton key={t[0]} t={t} />)}</Group>
        <Divider />
        <Group>
          {dimTools.map((t) => <ToolButton key={t[0]} t={t} />)}
          <Tool $raised><Icon name="tol" /><span>公差选</span><span>择</span><Drop as="i" /></Tool>
        </Group>
        <Divider />
        <Stack $w={104}>
          <StackRow><StackTool><Icon name="close" size={18} />关闭其他</StackTool></StackRow>
          <StackRow><StackTool><Icon name="book" size={18} />机械手册</StackTool></StackRow>
          <StackRow><StackTool><Icon name="calc" size={18} />选型计算</StackTool><Drop $w={30} aria-label="更多" /></StackRow>
        </Stack>
        <Stack $w={91}>
          <StackRow><StackTool><Icon name="cog" size={18} />改工具栏</StackTool></StackRow>
          <StackRow><StackTool><Icon name="globe" size={18} />精品模型</StackTool></StackRow>
          <StackRow><StackTool><Icon name="update" size={18} />在线更新</StackTool></StackRow>
        </Stack>
        <Group>{moreTools.map((t) => <ToolButton key={t[0]} t={t} wide />)}</Group>
      </Ribbon>

      <TabRow>
        {tabs.map(([t, w], i) => <CommandTab key={i} $w={w} $on={i === 6}>{t}</CommandTab>)}
        <HorizontalRuler />
      </TabRow>

      <Work>
        <SideTools>
          <GripX />
          <SideInner>
            {[0, 1, 2, 3, 4, 5, 6, 7].map((i) => <button key={i} aria-label={`注解工具 ${i + 1}`}><NoteIcon i={i} /></button>)}
          </SideInner>
        </SideTools>
        <VerticalRuler />
        <Panel>
          <PanelGrip><i /><b /></PanelGrip>
          <PanelTabs>
            <PanelTab aria-label="设计树"><Icon name="sheetDoc" size={18} /></PanelTab>
            <PanelTab aria-label="属性" $on><Icon name="propTab" size={18} /></PanelTab>
            <PanelMore aria-label="更多"><ChevronRight size={16} color="#444" /></PanelMore>
          </PanelTabs>
          <FilterBox><Icon name="filter" size={18} /><input aria-label="过滤" /></FilterBox>
          <Tree>
            <TreeRow $indent={4}><Icon name="sheetDoc" size={18} /><span><b>YM-ZSHLWTZZ-04-003</b>浮动板B</span></TreeRow>
            <TreeRow $indent={27}><Icon name="annot" size={18} />注解</TreeRow>
            <TreeRow $indent={8}><Twist $open /><Icon name="sheet" />图纸1</TreeRow>
            <TreeRow $indent={31}><Twist /><Icon name="format" />图纸格式1</TreeRow>
            <TreeRow $indent={31}><Twist /><Icon name="view1" />工程图视图1</TreeRow>
            <TreeRow $indent={31}><Twist /><Icon name="view2" />工程图视图2</TreeRow>
            <TreeRow $indent={31}><Twist /><Icon name="view2" />工程图视图3</TreeRow>
          </Tree>
          <SheetTabs>
            {["M2 1v8M9 1L4 5l5 4z", "M8 1L3 5l5 4z", "M3 1l5 4-5 4z", "M9 1v8M2 1l5 4-5 4z"].map((d, i) => (
              <NavButton key={d} aria-label={`翻页 ${i + 1}`}><svg width="11" height="10"><path d={d} fill="#8a8a8a" stroke="#8a8a8a" /></svg></NavButton>
            ))}
            <SheetTab $w={70} $on><Icon name="tabSheet" size={14} />图纸1</SheetTab>
            <SheetTab $w={38} aria-label="添加图纸"><Icon name="addSheet" size={14} /></SheetTab>
          </SheetTabs>
        </Panel>
        <CanvasColumn>
          <Canvas>
            <Drawing />
            <HeadsUp>
              {["zoomFit", "zoomAll", "zoomBox", "prev", "turn", "rebuild", "cube"].map((n) => <button key={n} aria-label={n}><Icon name={n} size={19} /></button>)}
              <Drop data-drop aria-label="显示样式" />
              <button aria-label="隐藏/显示"><Icon name="eye" size={19} /></button>
              <Drop data-drop aria-label="隐藏选项" />
              <button aria-label="外观"><Icon name="ball" size={19} /></button>
            </HeadsUp>
            <DocButtons>
              <button aria-label="上"><svg width="14" height="14"><path d="M.5 .5h13v13H.5z" fill="none" stroke="#567" /><path d="M3 7l4-4 4 4z" fill="#567" /></svg></button>
              <button aria-label="下"><svg width="14" height="14"><path d="M.5 .5h13v13H.5z" fill="none" stroke="#567" /><path d="M3 8l4 4 4-4z" fill="#567" /></svg></button>
              <button aria-label="最小化"><WinMin c="#567" /></button>
              <button aria-label="还原"><WinRestore c="#567" /></button>
              <button aria-label="关闭"><X size={16} color="#567" /></button>
            </DocButtons>
            <TaskPane>
              {["home", "books", "lib", "sheetDoc", "color", "propTab", "share"].map((n, i) => (
                <TaskButton key={n} $on={i === 3} aria-label={n}><Icon name={n} size={19} /></TaskButton>
              ))}
            </TaskPane>
            <Splitter aria-label="折叠面板" />
            <Halo />
            <Dialog onSubmit={(e) => e.preventDefault()}>
              <DialogTitle>Ican工具箱 尺寸链标准设置<button type="button" aria-label="关闭"><X size={17} strokeWidth={1} /></button></DialogTitle>
              <Section>标注基准</Section>
              <Options>
                {["左上角", "右上角", "视图中心", "左下角", "右下角", "自选基准"].map((t, i) => (
                  <Option key={t}><input type="radio" name="datum" defaultChecked={i === 3} /><span>{t}</span></Option>
                ))}
              </Options>
              <Section>其他设置</Section>
              <Options $tight>
                <Option><input type="checkbox" defaultChecked /><span>两侧标注</span></Option>
                <Option><input type="checkbox" /><span>只标孔定</span></Option>
                <Option $off><input type="checkbox" disabled /><span>标在点附</span></Option>
                <Option><input type="checkbox" /><span>标注倒角</span></Option>
                <Switch><input type="checkbox" role="switch" /><span>下次弹窗</span></Switch>
                <Confirm type="submit">确定</Confirm>
              </Options>
            </Dialog>
          </Canvas>
        </CanvasColumn>
      </Work>

      <LayerBar>
        <GripY />
        <LayerSelect><select aria-label="图层" defaultValue="-无-"><option>-无-</option></select><ChevronDown size={13} color="#444" /></LayerSelect>
        <LayerEnd><button aria-label="图层属性"><Icon name="layers" size={18} /></button></LayerEnd>
      </LayerBar>
      <StatusBar>
        <span>SOLIDWORKS Premium 2016 x64 版</span>
        <StatusRight>
          <Cell $w={82}>18.93mm</Cell><Cell $w={78}>144.48mm</Cell><Cell $w={31}>0mm</Cell><Cell $w={42} $sep>欠定义</Cell>
          <Cell $w={12} $sep /><Cell $w={116} $sep>在编辑 工程图视图1</Cell><Cell $w={26} /><Cell $w={76} $sep>1 : 1.5</Cell><Cell $w={30} /><Cell $w={60}>自定义</Cell>
        </StatusRight>
      </StatusBar>
      <TaskbarEdge><i /></TaskbarEdge>

      <Recorder>
        <time>00:00</time><output>24FPS</output>
        <RecButton $c="#e8372c" aria-label="停止"><svg width="12" height="12"><path d="M0 0h12v12H0z" fill="#e8372c" /></svg></RecButton>
        <RecButton $c="#e8372c" aria-label="暂停"><svg width="20" height="20" fill="none" stroke="#e8372c" strokeWidth="1.500"><circle cx="10" cy="10" r="9" /><path d="M8 6v8M12 6v8" /></svg></RecButton>
        <RecLine />
        <RecButton aria-label="形状"><svg width="20" height="20" fill="none" stroke="#444" strokeWidth="1.500"><path d="M7 14H2V2h11v4" /><circle cx="12" cy="12" r="6" /></svg></RecButton>
        <RecButton aria-label="折线"><svg width="20" height="20" fill="#444" stroke="#444" strokeWidth="1.500"><path d="M4 16V4l11 12V9" fill="none" /><circle cx="4" cy="3" r="1.500" /><circle cx="4" cy="16" r="1.500" /><circle cx="15" cy="17" r="1.500" /><circle cx="16" cy="8" r="1.500" /></svg></RecButton>
        <RecButton aria-label="箭头"><ArrowUpRight size={26} strokeWidth={1.3} /></RecButton>
        <RecButton aria-label="序号"><svg width="20" height="20" fill="none" stroke="#444" strokeWidth="1.500"><circle cx="10" cy="10" r="9" /><path d="M8 7l2-2v10" /></svg></RecButton>
        <RecButton aria-label="画笔"><Pencil size={18} strokeWidth={1.5} /></RecButton>
        <RecButton aria-label="文字"><Type size={20} strokeWidth={1.5} /></RecButton>
        <RecButton aria-label="橡皮"><Eraser size={19} strokeWidth={1.5} /></RecButton>
        <RecLine $short />
        <RecButton $w={29} aria-label="聚光灯"><Flashlight size={20} strokeWidth={1.5} /></RecButton>
        <RecButton $w={14} aria-label="更多"><svg width="4" height="18" fill="#444"><circle cx="2" cy="2" r="2" /><circle cx="2" cy="9" r="2" /><circle cx="2" cy="16" r="2" /></svg></RecButton>
        <RecLine />
        <RecButton $c="#999" aria-label="撤销"><RotateCcw size={18} strokeWidth={1.5} /></RecButton>
        <RecButton $c="#999" aria-label="重做"><RotateCw size={18} strokeWidth={1.5} /></RecButton>
        <RecLine />
        <RecButton aria-label="移动"><Move size={21} strokeWidth={1.5} /></RecButton>
        <RecButton aria-label="关闭"><X size={21} strokeWidth={1.5} /></RecButton>
        <RecButton aria-label="重新录制"><svg width="20" height="20" fill="none" stroke="#e8372c" strokeWidth="2"><path d="M3 5a8 8 0 1 1 0 10M1 2l2 5 5-1" /><circle cx="10" cy="10" r="3" fill="#e8372c" /></svg></RecButton>
      </Recorder>
      <Cursor width="12" height="20" viewBox="0 0 12 20"><path d="M1 1v15l3-3 3 6 2-1-3-6h5z" fill="#fff" stroke="#222" /></Cursor>
    </Page>
  );
}
